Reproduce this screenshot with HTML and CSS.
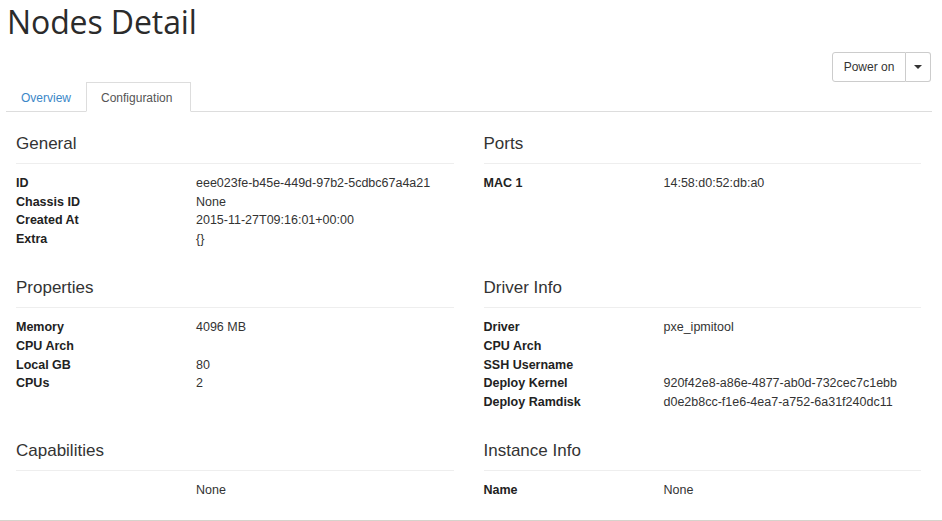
FILE: index.html
```html
<!DOCTYPE html>
<html>
<head>
<meta charset="utf-8">
<link rel="stylesheet" href="styles.css">
</head>
<body>
<div class="page">
  <h1 class="title">Nodes Detail</h1>
  <div class="toolbar">
    <div class="btn-group">
      <button class="btn">Power on</button>
      <button class="btn caret-btn"><span class="caret"></span></button>
    </div>
  </div>
  <ul class="tabs">
    <li class="tab first"><a class="tab-link">Overview</a></li>
    <li class="tab active"><a class="tab-link">Configuration</a></li>
  </ul>
  <div class="grid">
    <section class="sec">
      <h4 class="sec-title">General</h4>
      <dl class="dl">
        <dt>ID</dt><dd>eee023fe-b45e-449d-97b2-5cdbc67a4a21</dd>
        <dt>Chassis ID</dt><dd>None</dd>
        <dt>Created At</dt><dd>2015-11-27T09:16:01+00:00</dd>
        <dt>Extra</dt><dd>{}</dd>
      </dl>
    </section>
    <section class="sec">
      <h4 class="sec-title">Ports</h4>
      <dl class="dl">
        <dt>MAC 1</dt><dd>14:58:d0:52:db:a0</dd>
      </dl>
    </section>
    <section class="sec">
      <h4 class="sec-title">Properties</h4>
      <dl class="dl">
        <dt>Memory</dt><dd>4096 MB</dd>
        <dt>CPU Arch</dt><dd></dd>
        <dt>Local GB</dt><dd>80</dd>
        <dt>CPUs</dt><dd>2</dd>
      </dl>
    </section>
    <section class="sec">
      <h4 class="sec-title">Driver Info</h4>
      <dl class="dl">
        <dt>Driver</dt><dd>pxe_ipmitool</dd>
        <dt>CPU Arch</dt><dd></dd>
        <dt>SSH Username</dt><dd></dd>
        <dt>Deploy Kernel</dt><dd>920f42e8-a86e-4877-ab0d-732cec7c1ebb</dd>
        <dt>Deploy Ramdisk</dt><dd>d0e2b8cc-f1e6-4ea7-a752-6a31f240dc11</dd>
      </dl>
    </section>
    <section class="sec">
      <h4 class="sec-title">Capabilities</h4>
      <dl class="dl">
        <dt></dt><dd>None</dd>
      </dl>
    </section>
    <section class="sec">
      <h4 class="sec-title">Instance Info</h4>
      <dl class="dl">
        <dt>Name</dt><dd>None</dd>
      </dl>
    </section>
  </div>
  <div class="footer-line"></div>
</div>
</body>
</html>
```
FILE: styles.css
```css
* { box-sizing: border-box; }
html, body { margin: 0; padding: 0; background: #fff; }
body {
  font-family: "Liberation Sans", Arial, sans-serif;
  font-size: 13px;
  line-height: 18.6px;
  color: #333;
  overflow: hidden;
}
.page { width: 942px; }
.title {
  margin: 0;
  padding: 2px 0 0 7px;
  font-family: "Open Sans", "DejaVu Sans", sans-serif;
  font-weight: 400;
  font-size: 32px;
  line-height: 40px;
  letter-spacing: -0.1px;
  color: #2b2b2b;
  height: 52px;
}
.toolbar {
  display: flex;
  justify-content: flex-end;
  padding-right: 11px;
  height: 30px;
}
.btn-group { display: flex; }
.btn {
  font-family: "Liberation Sans", Arial, sans-serif;
  font-size: 12px;
  color: #333;
  background: #fff;
  border: 1px solid #ccc;
  height: 30px;
  padding: 0 10px;
  margin: 0;
  line-height: 28px;
}
.btn:first-child { border-radius: 3px 0 0 3px; width: 74px; }
.caret-btn {
  border-left: none;
  border-radius: 0 3px 3px 0;
  width: 25px;
  padding: 0;
  display: flex;
  align-items: center;
  justify-content: center;
}
.caret {
  width: 0; height: 0;
  border-left: 4px solid transparent;
  border-right: 4px solid transparent;
  border-top: 4px solid #333;
}
.tabs {
  list-style: none;
  margin: 0 10px 0 6px;
  padding: 0;
  display: flex;
  border-bottom: 1px solid #ddd;
  height: 30px;
}
.tab { margin-right: 2px; margin-bottom: -1px; }
.tab-link {
  display: block;
  font-size: 12px;
  line-height: 18px;
  padding: 6px 15px 5px;
  border: 1px solid transparent;
  border-bottom: none;
  color: #3b87c8;
  height: 30px;
}
.tab.first .tab-link { padding-left: 14px; padding-right: 12px; }
.tab.active .tab-link {
  color: #555;
  background: #fff;
  border-color: #ddd;
  border-bottom: 1px solid #fff;
  padding-left: 14px;
  padding-right: 14px;
  width: 105px;
}
.grid {
  display: grid;
  grid-template-columns: 1fr 1fr;
  column-gap: 30px;
  padding: 22px 21px 0 16px;
}
.sec { padding-bottom: 30px; }
.sec-title {
  margin: 0;
  font-size: 17px;
  line-height: 20px;
  font-weight: 400;
  color: #333;
  padding-bottom: 9px;
  border-bottom: 1px solid #eee;
}
.dl {
  margin: 10px 0 0;
  display: grid;
  grid-template-columns: 180px 1fr;
}
.dl dt {
  font-weight: 700;
  font-size: 12.5px;
  color: #222;
  min-height: 18.6px;
}
.dl dd { margin: 0; font-size: 12.5px; color: #333; min-height: 18.6px; }
.footer-line {
  border-top: 2px solid #d6d3cc;
  margin-top: -10px;
}
```
